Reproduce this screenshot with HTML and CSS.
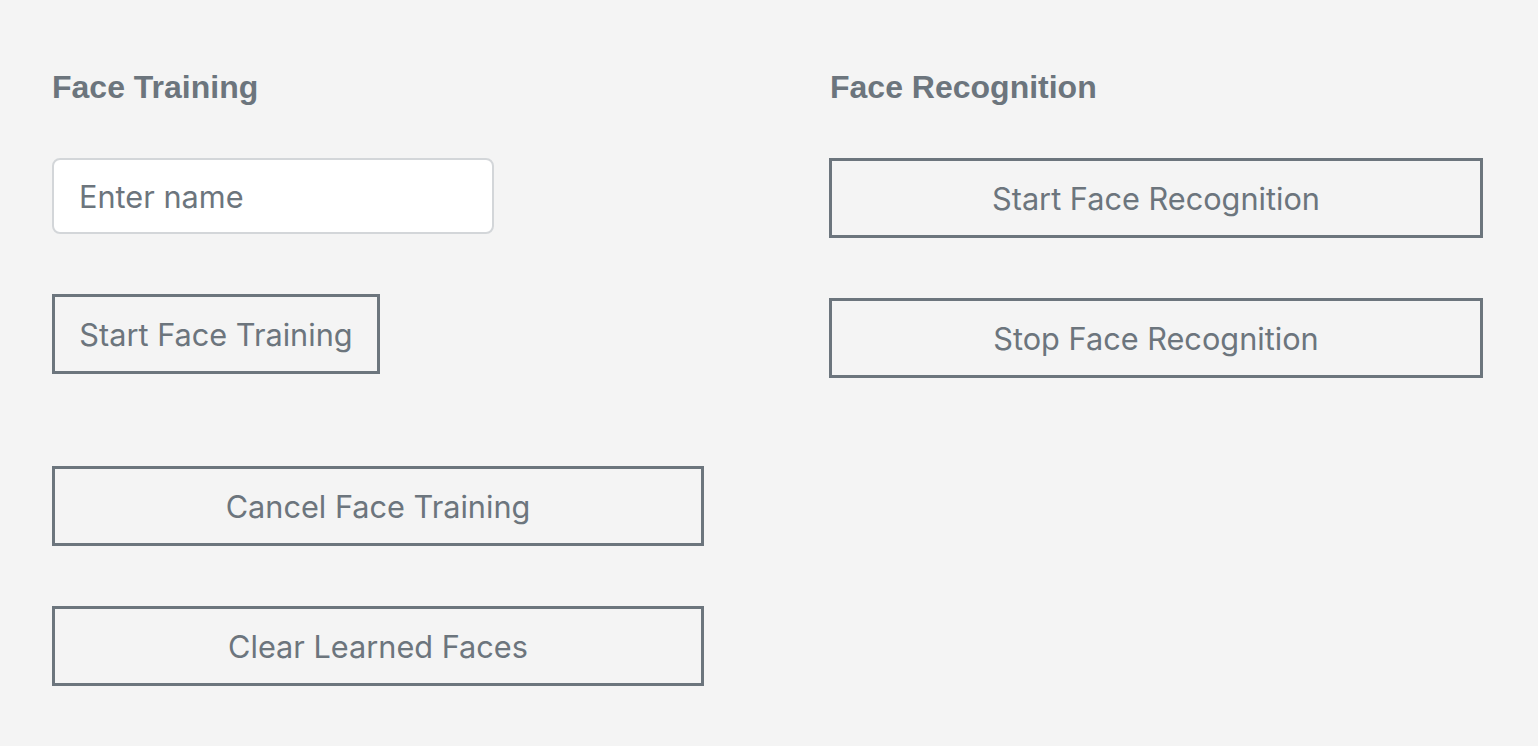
FILE: index.html
```html
<!DOCTYPE html>
<html lang="en">
<head>
<meta charset="utf-8">
<title>Face</title>
<link rel="stylesheet" href="styles.css">
</head>
<body>
<main class="page">
  <section class="col col-left">
    <h2 class="title">Face Training</h2>
    <input class="name-input" type="text" placeholder="Enter name">
    <button class="btn btn-auto btn-start-train">Start Face Training</button>
    <button class="btn btn-full btn-cancel">Cancel Face Training</button>
    <button class="btn btn-full btn-clear">Clear Learned Faces</button>
  </section>
  <section class="col col-right">
    <h2 class="title">Face Recognition</h2>
    <button class="btn btn-full btn-start-rec">Start Face Recognition</button>
    <button class="btn btn-full btn-stop-rec">Stop Face Recognition</button>
  </section>
</main>
</body>
</html>
```
FILE: styles.css
```css
* { box-sizing: border-box; }
html, body {
  margin: 0;
  padding: 0;
  background: #f4f4f4;
  height: 100%;
}
body {
  font-family: Inter, "Noto Sans", sans-serif;
  color: #6c757d;
}
.page {
  display: grid;
  grid-template-columns: 652px 654px;
  column-gap: 125px;
  padding: 68px 0 0 52px;
}
.col {
  display: flex;
  flex-direction: column;
  align-items: flex-start;
}
.col-right .title { margin-left: 1px; }
.title {
  margin: 0;
  font-family: "Liberation Sans", Arial, sans-serif;
  font-weight: 700;
  font-size: 32px;
  line-height: 38px;
  color: #6c757d;
}
.name-input {
  margin-top: 52px;
  width: 442px;
  height: 76px;
  border: 2px solid #d3d6d9;
  border-radius: 8px;
  background: #fff;
  padding: 0 0 0 25px;
  font-family: Inter, "Noto Sans", sans-serif;
  font-size: 30.7px;
  color: #6c757d;
  outline: none;
}
.name-input::placeholder {
  color: #6c757d;
  opacity: 1;
}
.btn {
  height: 80px;
  border: 3px solid #6c757d;
  background: transparent;
  color: #6c757d;
  font-family: Inter, "Noto Sans", sans-serif;
  font-size: 30.7px;
  padding: 0 25px;
  border-radius: 0;
  cursor: pointer;
}
.btn-full { width: 100%; }
.btn-start-train { margin-top: 60px; width: 328px; padding: 0; }
.btn-cancel { margin-top: 92px; }
.btn-clear { margin-top: 60px; }
.btn-start-rec { margin-top: 52px; }
.btn-stop-rec { margin-top: 60px; }
```
